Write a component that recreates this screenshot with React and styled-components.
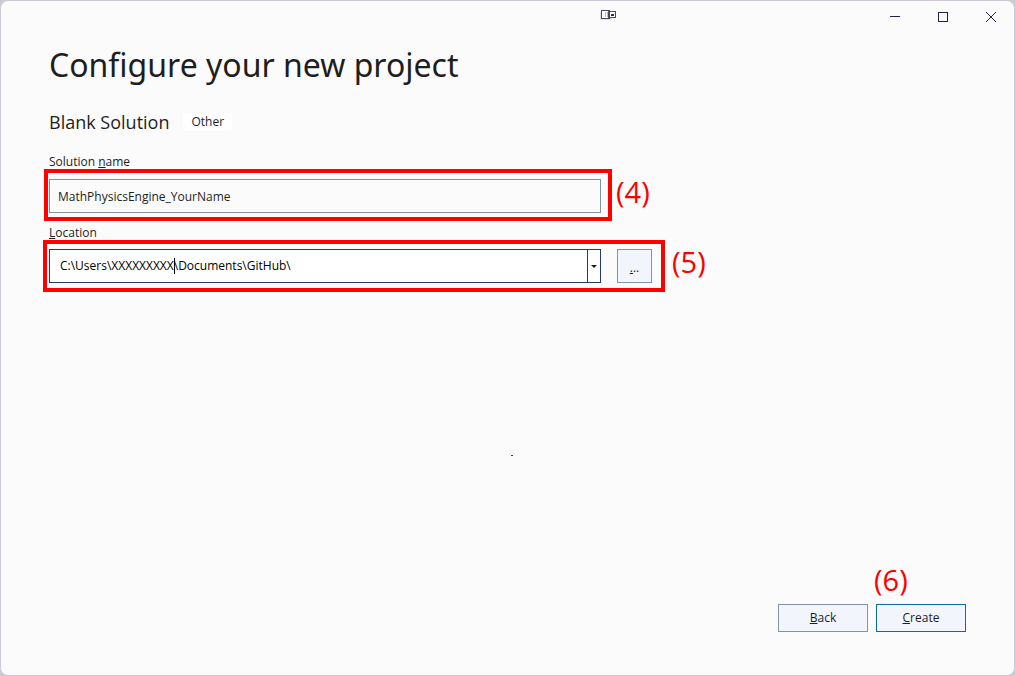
import React from "react";
import styled, { createGlobalStyle } from "styled-components";

const GlobalStyle = createGlobalStyle`
  *, *::before, *::after { box-sizing: border-box; }
  body { margin: 0; background: #cccbd0; }
  body, button, input {
    font-family: "Open Sans", "Noto Sans", sans-serif;
    font-size: 12px;
    line-height: 16px;
    color: #1e1e1e;
  }
`;

const Dialog = styled.div`
  display: flex;
  flex-direction: column;
  min-height: 100vh;
  background: #fbfbfb;
  border: 1px solid #cccad8;
  border-radius: 8px;
`;

const TitleBar = styled.header`
  display: grid;
  grid-template-columns: 1fr auto 1fr;
  height: 32px;
`;

const CaptureMark = styled.svg`
  grid-column: 2;
  display: block;
  margin: 8px 0 0 200px;
`;

const WindowControls = styled.div`
  grid-column: 3;
  display: flex;
  justify-content: flex-end;
  margin-right: -1px;
`;

const WindowButton = styled.button`
  display: flex;
  align-items: center;
  justify-content: center;
  width: 48px;
  height: 32px;
  padding: 0;
  border: 0;
  background: transparent;
  color: #1b2440;
`;

const Content = styled.main`
  flex: 1;
  display: flex;
  flex-direction: column;
  padding: 8px 48px 0;
`;

const Title = styled.h1`
  margin: 0;
  font-family: "Noto Sans", sans-serif;
  font-size: 32px;
  line-height: 48px;
  font-weight: 400;
`;

const Template = styled.div`
  display: flex;
  align-items: center;
  gap: 14px;
  margin-top: 21px;
  height: 24px;
`;

const TemplateName = styled.h2`
  margin: 0;
  font-size: 18px;
  line-height: 24px;
  font-weight: 400;
`;

const Tag = styled.span`
  padding: 1px 8px;
  background: #fff;
  border-radius: 2px;
`;

const Form = styled.form`
  display: flex;
  flex-direction: column;
  flex: 1;
`;

const Field = styled.div`
  display: flex;
  flex-direction: column;
  align-items: flex-start;
  margin-top: ${(p) => (p.$first ? 20 : 12)}px;
`;

const Label = styled.label`
  line-height: 16px;
`;

const Key = styled.u`
  text-decoration-thickness: 1px;
  text-underline-offset: 1px;
`;

const FieldRow = styled.div`
  position: relative;
  display: flex;
  align-items: center;
  gap: 16px;
  margin-top: ${(p) => p.$gap}px;
`;

const TextInput = styled.input`
  width: 552px;
  height: 34px;
  padding: 0 8px;
  border: 1px solid #8591a8;
  border-radius: 0;
  background: #fbfbfb;
  outline: 0;
`;

const Combo = styled.div`
  position: relative;
  display: flex;
  width: 552px;
  height: 34px;
  border: 1px solid #263a70;
  background: #fff;
`;

const ComboInput = styled.input`
  flex: 1;
  min-width: 0;
  padding: 0 10px;
  border: 0;
  background: transparent;
  color: #000;
  outline: 0;
`;

const ComboToggle = styled.button`
  display: flex;
  align-items: center;
  justify-content: center;
  width: 13px;
  padding: 0;
  border: 0;
  border-left: 1px solid #263a70;
  background: #fff;
`;

const Caret = styled.span`
  position: absolute;
  left: 124px;
  top: 8px;
  width: 1px;
  height: 16px;
  background: #000;
`;

const Button = styled.button`
  width: ${(p) => (p.$small ? 35 : 90)}px;
  height: ${(p) => (p.$small ? 34 : 28)}px;
  padding: ${(p) => (p.$small ? "4px 0 0" : 0)};
  border: 1px solid ${(p) => (p.$primary ? "#0f6a9f" : "#8591ab")};
  border-radius: 0;
  background: #f2f5fc;
`;

const Highlight = styled.div`
  position: absolute;
  top: ${(p) => p.$top}px;
  left: ${(p) => p.$left}px;
  right: ${(p) => p.$right}px;
  height: 52px;
  border: 4px solid #fe0000;
  pointer-events: none;
`;

const Step = styled.span`
  position: absolute;
  font-size: 29px;
  line-height: 32px;
  color: #fe0000;
`;

const RowStep = styled(Step)`
  left: 100%;
  top: -3px;
  margin-left: ${(p) => p.$gap}px;
`;

const CreateStep = styled(Step)`
  left: -2px;
  bottom: 100%;
  margin-bottom: 8px;
`;

const Body = styled.div`
  flex: 1;
  display: flex;
  align-items: center;
  justify-content: center;
  min-height: 80px;
`;

const Speck = styled.span`
  width: 2px;
  height: 1px;
  margin-left: 8px;
  margin-top: 24px;
  background: #8c2020;
`;

const Actions = styled.footer`
  display: flex;
  justify-content: flex-end;
  gap: 8px;
  padding-bottom: 43px;
`;

const ActionSlot = styled.div`
  position: relative;
  display: flex;
`;

export default function App() {
  return (
    <>
      <GlobalStyle />
      <Dialog>
        <TitleBar>
          <CaptureMark width="18" height="13" viewBox="0 0 18 13" aria-hidden="true">
            <rect x="1" y="3" width="12" height="8" fill="#dcdce2" />
            <rect x="2.5" y="1.5" width="8" height="8" fill="#fff" stroke="#484a5e" />
            <path d="M6.5 3v5M8.5 3v5" stroke="#b9b9c3" />
            <path d="M10 1v9" stroke="#484a5e" strokeWidth="2" />
            <rect x="10.5" y="2.5" width="6" height="6" fill="#fff" stroke="#484a5e" />
            <rect x="12" y="5" width="3" height="2" fill="#2c2f48" />
          </CaptureMark>
          <WindowControls>
            <WindowButton type="button" aria-label="Minimize">
              <svg width="12" height="12" viewBox="0 0 12 12" stroke="currentColor">
                <path d="M1 5.5h10" />
              </svg>
            </WindowButton>
            <WindowButton type="button" aria-label="Maximize">
              <svg width="12" height="12" viewBox="0 0 12 12" fill="none" stroke="currentColor">
                <rect x="1.5" y="1.5" width="9" height="9" />
              </svg>
            </WindowButton>
            <WindowButton type="button" aria-label="Close">
              <svg width="12" height="12" viewBox="0 0 12 12" stroke="currentColor">
                <path d="M1 1l10 10M11 1L1 11" />
              </svg>
            </WindowButton>
          </WindowControls>
        </TitleBar>
        <Content>
          <Title>Configure your new project</Title>
          <Template>
            <TemplateName>Blank Solution</TemplateName>
            <Tag>Other</Tag>
          </Template>
          <Form onSubmit={(e) => e.preventDefault()}>
            <Field $first>
              <Label htmlFor="solution">
                Solution <Key>n</Key>ame
              </Label>
              <FieldRow $gap={9}>
                <TextInput id="solution" defaultValue="MathPhysicsEngine_YourName" spellCheck={false} />
                <Highlight $top={-10} $left={-5} $right={-11} />
                <RowStep $gap={15}>(4)</RowStep>
              </FieldRow>
            </Field>
            <Field>
              <Label htmlFor="location">
                <Key>L</Key>ocation
              </Label>
              <FieldRow $gap={8}>
                <Combo>
                  <ComboInput id="location" defaultValue={"C:\\Users\\XXXXXXXXX\\Documents\\GitHub\\"} spellCheck={false} />
                  <Caret />
                  <ComboToggle type="button" aria-label="Show recent locations">
                    <svg width="6" height="3" viewBox="0 0 6 3">
                      <path d="M0 0h6L3 3z" fill="#1e1e1e" />
                    </svg>
                  </ComboToggle>
                </Combo>
                <Button type="button" $small aria-label="Browse">
                  <Key>.</Key>..
                </Button>
                <Highlight $top={-9} $left={-6} $right={-13} />
                <RowStep $gap={20}>(5)</RowStep>
              </FieldRow>
            </Field>
            <Body>
              <Speck />
            </Body>
            <Actions>
              <Button type="button">
                <Key>B</Key>ack
              </Button>
              <ActionSlot>
                <Button type="submit" $primary>
                  <Key>C</Key>reate
                </Button>
                <CreateStep>(6)</CreateStep>
              </ActionSlot>
            </Actions>
          </Form>
        </Content>
      </Dialog>
    </>
  );
}
